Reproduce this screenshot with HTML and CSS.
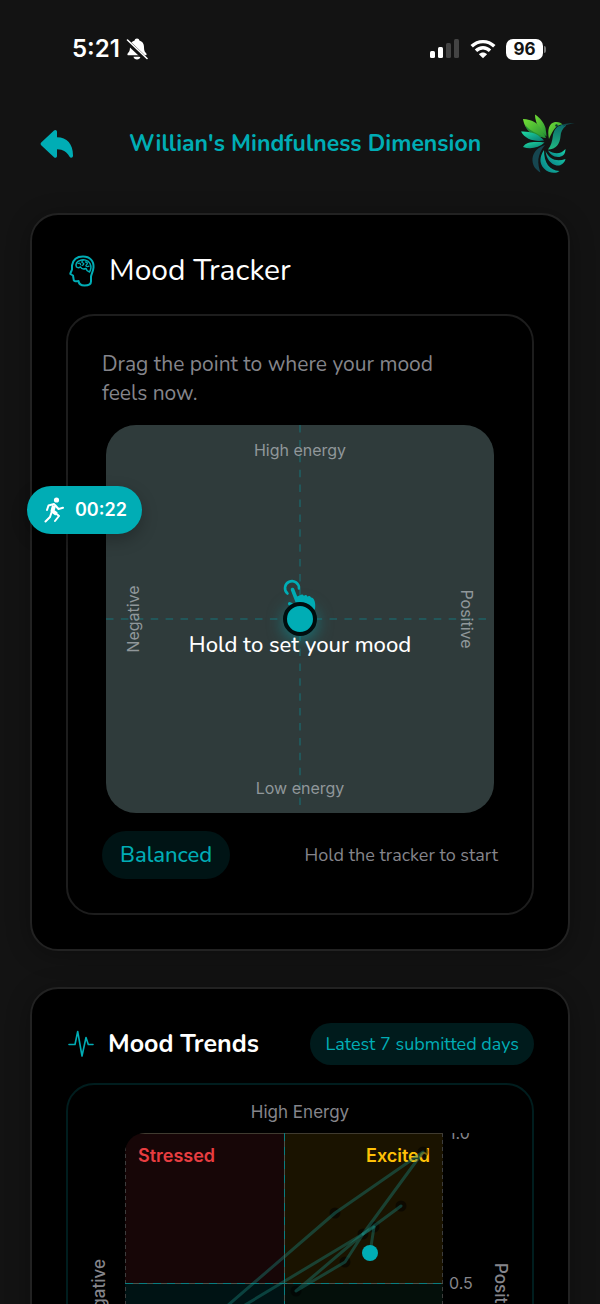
FILE: index.html
```html
<!DOCTYPE html>
<html lang="en">
<head>
<meta charset="utf-8">
<meta name="viewport" content="width=device-width, initial-scale=1">
<title>Mindfulness Dimension</title>
<link rel="stylesheet" href="styles.css">
</head>
<body>
<div class="app">
  <div class="status">
    <div class="status-left">
      <span class="clock">5:21</span>
      <svg class="bell" viewBox="0 0 22 24" aria-hidden="true">
        <path d="M11 1.500c1.400 0 2.200.8 2.400 1.900 3 .9 4.600 3.300 4.600 6.300 0 4 .8 5 2.300 6.700.6.800.3 1.800-.8 1.800H2.500c-1.100 0-1.400-1-.8-1.800C3.200 14.700 4 13.700 4 9.700c0-3 1.600-5.400 4.600-6.300.2-1.100 1-1.900 2.400-1.900z" fill="#fff"/>
        <path d="M7.500 19.800h7c-.4 1.700-1.700 2.700-3.500 2.700s-3.100-1-3.500-2.700z" fill="#fff"/>
        <path d="M.5 4 20 22.500" stroke="#131313" stroke-width="4.500"/>
        <path d="M1.500 3 21 21.500" stroke="#fff" stroke-width="1.600" stroke-linecap="round"/>
      </svg>
    </div>
    <div class="status-right">
      <svg class="signal" viewBox="0 0 30 20" aria-hidden="true">
        <rect x="0" y="12" width="5" height="7" rx="1.500" fill="#fff"/>
        <rect x="8" y="8" width="5" height="11" rx="1.500" fill="#fff"/>
        <rect x="16" y="4" width="5" height="15" rx="1.500" fill="#444"/>
        <rect x="24" y="0" width="5" height="19" rx="1.500" fill="#444"/>
      </svg>
      <svg class="wifi" viewBox="0 0 26 20" aria-hidden="true">
        <g fill="none" stroke="#fff" stroke-width="3.400">
          <path d="M1.700 7.300C8 1 18 1 24.300 7.300"/>
          <path d="M6 11.800c4-4 10-4 14 0"/>
        </g>
        <path d="M13 19.300 8.900 15.200c2.400-2.200 5.800-2.200 8.200 0z" fill="#fff"/>
      </svg>
      <div class="battery"><span class="battery-level">96</span><span class="battery-tip"></span></div>
    </div>
  </div>

  <header class="topbar">
    <button class="back" type="button" aria-label="Back">
      <svg viewBox="0 0 34 30" aria-hidden="true">
        <path d="M14 1.500c1.300-1.200 3-.4 3 1.200V8.300c10 .1 16 6.700 16 18.200 0 2.600-2.500 2.800-3.600 1C26.700 23 23.500 20.500 17 20.300V27c0 1.700-1.700 2.400-3 1.200L1.200 16.200c-.8-.8-.8-1.900 0-2.700z" fill="#00adb5"/>
      </svg>
    </button>
    <h1 class="title">Willian's Mindfulness Dimension</h1>
    <svg class="logo" viewBox="10 12 58 62" role="img" aria-label="Hummingbird">
      <defs>
        <linearGradient id="leaf" x1="0" y1="0" x2="1" y2="1"><stop offset="0" stop-color="#72df35"/><stop offset="1" stop-color="#238f35"/></linearGradient>
        <linearGradient id="wing" x1="0" y1="0" x2="1" y2="1"><stop offset="0" stop-color="#20dda6"/><stop offset="1" stop-color="#08786f"/></linearGradient>
        <linearGradient id="body" x1="0" y1="0" x2="0" y2="1"><stop offset="0" stop-color="#0b686b"/><stop offset="1" stop-color="#20b982"/></linearGradient>
        <linearGradient id="tail" x1="0" y1="1" x2="1" y2="0"><stop offset="0" stop-color="#077681"/><stop offset="1" stop-color="#1be0b0"/></linearGradient>
      </defs>
      <path d="M25 13.500c5 3.500 9 8 10.500 13.500.5 4 1 6 1 8.500C31 31 25 23 25 13.500z" fill="url(#leaf)"/>
      <path d="M13 18c9 .5 15 4 18 10 2 3.500 4 6 5 9-10-1.500-21-6-23-19z" fill="url(#leaf)"/>
      <path d="M15 24c5 6 12 8.500 20 12.500C24 35 17 31 15 24z" fill="#248e36"/>
      <path d="M11 30.500c9-.5 17 2 23 9-9 1.500-19-1-23-9z" fill="url(#wing)"/>
      <path d="M13 46c3-5 10-5.500 21.500-4.500C29 47 20 48.500 13 46z" fill="url(#wing)"/>
      <path d="M39 38c-2-9 0-16 6-17 4-.4 6 .8 7.500 2.500-6 .5-9 4-13.500 14.500z" fill="url(#leaf)"/>
      <path d="M56 23.200c-3 .2-5 .8-7 1.800-4 2-5 5-6 9-.7 6-2 11-5 14.500 8 0 12-6 12.500-13 .2-4.500 2-8 5.500-10.800z" fill="url(#body)"/>
      <path d="M65 22.300c-4-.3-8 0-11 .9l-1 2.300c3-1.300 7-2.600 12-3.200z" fill="#12464a"/>
      <circle cx="46.500" cy="24.500" r="1.200" fill="#08363a"/>
      <path d="M35 44c-9 3-13 9-12.500 16 .3 5 3.500 9 8 11.500-3-9-4-17 4.500-27.500z" fill="#164650"/>
      <path d="M34 49c-4.500 7-5 13 0 18.500 4.500 5 12 5.500 15.500 2.500-10-.5-15.500-8-15.500-21z" fill="url(#tail)"/>
      <path d="M35.500 50c1 8 5 13 11 14.500 4 .6 8-2 9-6.500-9 3-16 .5-20-8z" fill="url(#tail)"/>
      <path d="M38 49.500c6 3.500 13 4 17.500-1.500 0 6-3.500 8-7.500 8-5 0-8-3-10-6.500z" fill="url(#tail)"/>
    </svg>
  </header>

  <main class="content">
    <section class="card">
      <h2 class="card-title">
        <svg class="head-icon" viewBox="0 0 26 32" fill="none" stroke="#00adb5" stroke-linecap="round" stroke-linejoin="round" aria-hidden="true">
          <path d="M3 10.500C4 4.500 8 1.500 14 1.500c7 0 11 4.500 10.500 11-.2 3.500-2 6-2.500 9v5c0 3-3 4-6.500 4s-5.500-.8-6-4.500c-3 .7-5.200.3-5-2.500l-.5-3L1.300 19c.2-1.500 1.200-2.800 1.700-4.500z" stroke-width="2"/>
          <path d="M7.500 12c-1.500-3 .5-6 3.500-6.500 3.500-1.300 8-.7 10 3 1.500 3 .7 6.500-.5 8.500-2-.5-3-1.500-3.500-3.500-2.500 1-4.500.5-5.500-1.500-1.500.8-3 .8-4 0z" stroke-width="1.500"/>
          <path d="M9 8.500c1.500-1 2.500 0 2.500 1.200M14 5.500c-1.500 1-1.500 2 0 2.500s.5 2-.8 2.300M16.500 7c2 0 2.500 1.500 1 2.700s0 2.500 2.500 1.500" stroke-width="1.300"/>
        </svg>
        <span>Mood Tracker</span>
      </h2>
      <div class="panel">
        <p class="hint">Drag the point to where your mood feels now.</p>
        <div class="pad">
          <svg class="pad-axes" viewBox="0 0 388 388" stroke="#22575a" stroke-width="2" stroke-dasharray="7.500 7.400" aria-hidden="true">
            <path d="M194 0v380M0 194h380"/>
          </svg>
          <span class="pad-top">High energy</span>
          <span class="pad-left">Negative</span>
          <span class="pad-right">Positive</span>
          <span class="pad-bottom">Low energy</span>
          <svg class="hand" viewBox="0 0 34 34" aria-hidden="true">
            <path d="M4.500 13.500A7 7 0 1 1 16 8.500" fill="none" stroke="#00adb5" stroke-width="2.600" stroke-linecap="round"/>
            <path d="m9.500 9.500 5.500 14" stroke="#00adb5" stroke-width="3.600" stroke-linecap="round"/>
            <path d="m13 17 4.500-2c1-1 3-.5 3.500 1 1-1.500 3-1 3.500.7 1-1.300 2.800-.8 3.500.7 3.500 0 5 6 4 11.500-3 5-12.500 5-16.500.5L5.500 25c-1.500-2 .5-4 2.500-2.500l5.500 3z" fill="#00adb5"/>
          </svg>
          <button class="knob" type="button" aria-label="Mood point"></button>
          <span class="pad-message">Hold to set your mood</span>
        </div>
        <div class="panel-foot">
          <span class="mood-chip">Balanced</span>
          <span class="foot-note">Hold the tracker to start</span>
        </div>
      </div>
    </section>

    <section class="card">
      <div class="trend-head">
        <svg class="pulse" viewBox="0 0 26 28" aria-hidden="true">
          <path d="M1 14.500h6L9.700 1.500 14 26l4-18.500 2.300 7H25" fill="none" stroke="#00adb5" stroke-width="1.600" stroke-linecap="round" stroke-linejoin="round"/>
        </svg>
        <h2 class="trend-title">Mood Trends</h2>
        <span class="range-chip">Latest 7 submitted days</span>
      </div>
      <div class="chart">
        <span class="axis-top">High Energy</span>
        <span class="axis-side axis-left">Negative</span>
        <div class="plot">
          <span class="stressed">Stressed</span>
          <span class="excited">Excited</span>
          <svg class="plot-lines" viewBox="0 0 318 300" fill="none" aria-hidden="true">
            <path d="M.5 0v300M317.500 0v300" stroke="#3d3d3d" stroke-dasharray="4 3"/>
            <path d="M0 .5h318" stroke="#403b30"/>
            <path d="M159.500 0v300M0 150.500h318" stroke="#4b5149"/>
            <path d="M159.500 0v300M0 150.500h318" stroke="#087d80" stroke-dasharray="8 6"/>
            <g fill="#000" fill-opacity=".5">
              <circle cx="298" cy="19" r="5.500"/><circle cx="210" cy="80" r="5.500"/><circle cx="276" cy="73" r="5.500"/><circle cx="249" cy="94" r="5.500"/><circle cx="238" cy="101" r="5.500"/><circle cx="220" cy="129" r="5.500"/><circle cx="171" cy="158" r="5.500"/>
            </g>
            <g stroke="#1b8d83" stroke-opacity=".38" stroke-width="3" stroke-linecap="round" stroke-linejoin="round">
              <path d="m245 120 4-26"/>
              <path d="m249 94-11 7"/>
              <path d="m238 101 60-82-88 61L80 192"/>
              <path d="m276 73-38 28-118 71-40 30"/>
              <path d="m238 101-18 28-49 29 67-57"/>
            </g>
            <circle cx="245" cy="120" r="8" fill="#00adb5"/>
          </svg>
        </div>
        <div class="scale"><span class="scale-max">1.0</span><span class="scale-mid">0.5</span></div>
        <span class="axis-side axis-right">Positive</span>
      </div>
    </section>
  </main>

  <div class="timer">
    <svg class="runner" viewBox="0 0 20 26" aria-hidden="true">
      <circle cx="12.500" cy="3" r="2.600" fill="#fff"/>
      <path d="M10 8.500 8.500 14l4 3" fill="none" stroke="#fff" stroke-width="4" stroke-linejoin="round"/>
      <path d="m10 7-5.500 1.500L3 13M11 8l3.500 4 4.500-1.200M11.500 16l3.500 3-4 5M7.500 15.500 6 20l-4.500 4.500" fill="none" stroke="#fff" stroke-width="2" stroke-linecap="round" stroke-linejoin="round"/>
    </svg>
    <span>00:22</span>
  </div>
</div>
</body>
</html>
```
FILE: styles.css
```css
* { box-sizing: border-box; }

:root {
  --teal: #00adb5;
  --round: "Nunito", "Noto Sans", sans-serif;
  --system: "Inter", "Liberation Sans", sans-serif;
}

body {
  margin: 0;
  background: #131313;
  color: #fff;
  font-family: var(--round);
}

h1, h2, p { margin: 0; font-weight: 400; }
svg { display: block; flex: none; }

button {
  padding: 0;
  border: 0;
  background: none;
  cursor: pointer;
}

.app {
  position: relative;
  height: 100vh;
  overflow: hidden;
}

/* Status bar */
.status {
  display: flex;
  align-items: center;
  justify-content: space-between;
  height: 98px;
  padding: 0 54px 0 72px;
  font-family: var(--system);
}

.status-left, .status-right { display: flex; align-items: center; }
.status-left { gap: 6px; }
.status-right { gap: 10px; }
.clock { font-size: 24px; font-weight: 600; line-height: 28px; }
.bell { width: 22px; height: 24px; }
.signal { width: 30px; height: 20px; }
.wifi { width: 26px; height: 20px; }
.battery { display: flex; align-items: center; gap: 1px; }

.battery-level {
  width: 37px;
  border-radius: 7px;
  background: #fff;
  color: #131313;
  font-size: 17px;
  font-weight: 700;
  line-height: 21px;
  text-align: center;
}

.battery-tip {
  width: 2px;
  height: 7px;
  border-radius: 0 2px 2px 0;
  background: #777;
}

/* Header */
.topbar {
  display: flex;
  align-items: center;
  justify-content: space-between;
  height: 91px;
  padding: 0 22px 0 40px;
}

.back svg { width: 34px; height: 30px; }
.title { color: var(--teal); font-size: 23px; font-weight: 700; line-height: 30px; }
.logo { width: 58px; height: 62px; margin-left: -16px; }

/* Cards */
.content {
  display: flex;
  flex-direction: column;
  gap: 36px;
  padding: 24px 30px;
}

.card {
  padding: 34px;
  border: 2px solid #222;
  border-radius: 28px;
  background: #000;
  box-shadow: 0 4px 24px rgba(0, 0, 0, .3);
}

.card-title {
  display: flex;
  align-items: center;
  gap: 14px;
  padding: 1px 0 0 3px;
  font-size: 30px;
  line-height: 42px;
}

.head-icon { width: 26px; height: 32px; }

.panel {
  margin-top: 22px;
  padding: 34px;
  border: 2px solid #1d1d1d;
  border-radius: 28px;
}

.hint {
  max-width: 360px;
  color: #85858b;
  font-size: 21px;
  line-height: 29px;
}

.pad {
  position: relative;
  aspect-ratio: 1;
  margin: 17px 4px 0;
  border-radius: 30px;
  background: #2f3b3b;
  color: #90979a;
  font-family: var(--system);
  font-size: 16px;
  line-height: 22px;
}

.pad > * { position: absolute; }
.pad-axes { inset: 0; width: 100%; height: 100%; }
.pad-top, .pad-bottom, .pad-message { right: 0; left: 0; text-align: center; }
.pad-top { top: 14px; }
.pad-bottom { bottom: 14px; }

.pad-left, .pad-right {
  top: 50%;
  writing-mode: vertical-rl;
}

.pad-left { left: 16px; transform: translateY(-50%) rotate(180deg); }
.pad-right { right: 16px; transform: translateY(-50%); }

.hand {
  bottom: 50%;
  left: 50%;
  width: 34px;
  height: 34px;
  margin: 0 0 5px -17px;
  overflow: visible;
}

.knob {
  top: 50%;
  left: 50%;
  width: 34px;
  height: 34px;
  margin: -17px;
  border: 4px solid #000e0f;
  border-radius: 50%;
  background: var(--teal);
  box-shadow: 0 4px 16px rgba(0, 173, 181, .5);
}

.pad-message {
  top: 50%;
  margin-top: 11px;
  color: #fff;
  font-family: var(--round);
  font-size: 22px;
  font-weight: 500;
  line-height: 30px;
}

.panel-foot {
  display: flex;
  align-items: center;
  justify-content: space-between;
  margin-top: 18px;
  color: #85858b;
  font-size: 18px;
}

.mood-chip {
  padding: 0 18px;
  border-radius: 24px;
  background: #001415;
  color: var(--teal);
  font-size: 22px;
  font-weight: 500;
  line-height: 48px;
}

/* Trends */
.trend-head { display: flex; align-items: center; }
.pulse { width: 26px; height: 28px; margin: 0 14px 0 2px; }
.trend-title { font-size: 25px; font-weight: 700; line-height: 42px; }

.range-chip {
  margin-left: auto;
  padding: 0 15px;
  border-radius: 21px;
  background: #001b1c;
  color: var(--teal);
  font-size: 18px;
  line-height: 42px;
  white-space: nowrap;
}

.chart {
  display: grid;
  grid-template-columns: 24px minmax(0, 1fr) 18px 24px;
  column-gap: 14px;
  margin-top: 18px;
  padding: 15px 19px 30px;
  border: 2px solid #001d1e;
  border-radius: 28px;
  color: #85858b;
  font-family: var(--system);
  font-size: 17px;
  line-height: 24px;
}

.axis-top {
  grid-column: 1 / -1;
  margin-bottom: 9px;
  text-align: center;
}

.axis-side {
  align-self: center;
  margin-top: 24px;
  font-weight: 500;
  writing-mode: vertical-rl;
}

.axis-left { transform: rotate(180deg); }

.plot {
  position: relative;
  display: flex;
  justify-content: space-between;
  aspect-ratio: 318 / 300;
  padding: 11px 13px;
  overflow: hidden;
  border-radius: 20px 0 0 0;
  background:
    linear-gradient(#170607, #170607) 0 0 / 50% 50% no-repeat,
    linear-gradient(#1a1300, #1a1300) 100% 0 / 50% 50% no-repeat,
    linear-gradient(90deg, #001314 50%, #040f0a 50%);
  font-size: 18px;
  font-weight: 600;
}

.plot-lines { position: absolute; inset: 0; width: 100%; height: 100%; }
.stressed { color: #e73d40; }
.excited { color: #ffc107; }

.scale {
  display: flex;
  flex-direction: column;
  overflow: hidden;
  margin-left: -8px;
  font-size: 16px;
}

.scale-max { margin-top: -12px; }
.scale-mid { margin-top: 126px; }

/* Floating timer */
.timer {
  position: absolute;
  top: 486px;
  left: 27px;
  display: flex;
  align-items: center;
  gap: 11px;
  padding: 0 15px 0 17px;
  border-radius: 24px;
  background: var(--teal);
  box-shadow: 0 6px 16px rgba(0, 0, 0, .25);
  font-family: var(--system);
  font-size: 18px;
  font-weight: 600;
  line-height: 48px;
}

.runner { width: 20px; height: 26px; }
```
